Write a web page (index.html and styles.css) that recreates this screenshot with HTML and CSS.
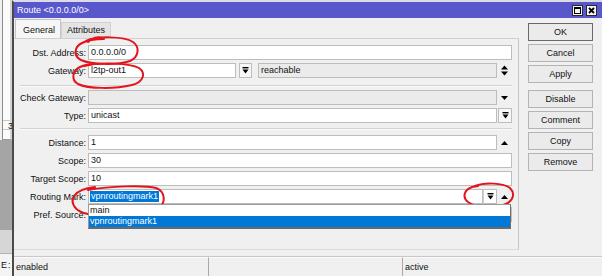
FILE: index.html
```html
<!DOCTYPE html>
<html lang="en">

<head>
    <meta charset="UTF-8">
    <title>Route &lt;0.0.0.0/0&gt;</title>
    <link rel="stylesheet" href="styles.css">
</head>

<body>
    <div class="screen">
        <div class="backdrop">
            <div class="bk-top">
                <div class="bk-row">3</div>
            </div>
            <div class="bk-mid"></div>
            <div class="bk-low"></div>
            <div class="bk-bot">E:</div>
        </div>

        <div class="window">
            <div class="titlebar">
                <span class="title">Route &lt;0.0.0.0/0&gt;</span>
                <div class="winbtns">
                    <span class="winbtn"><span class="max-icon"></span></span>
                    <span class="winbtn">
                        <svg width="7" height="7" viewBox="0 0 7 7"><path d="M1 1L6 6M6 1L1 6" stroke="#000" stroke-width="1.8"/></svg>
                    </span>
                </div>
            </div>

            <div class="main">
                <div class="left">
                    <div class="tabs">
                        <div class="tab active">General</div>
                        <div class="tab">Attributes</div>
                    </div>
                    <div class="panel">
                        <div class="group">
                            <div class="row">
                                <span class="label">Dst. Address:</span>
                                <div class="field">0.0.0.0/0</div>
                            </div>
                            <div class="row">
                                <span class="label">Gateway:</span>
                                <div class="field gw">l2tp-out1</div>
                                <div class="ddbtn gw-btn">
                                    <svg width="7" height="7" viewBox="0 0 7 7"><rect x="0.5" y="0" width="6" height="1.4"/><path d="M0.5 2.6H6.5L3.5 6.6Z"/></svg>
                                </div>
                                <div class="field ro reach">reachable</div>
                                <div class="icon-col">
                                    <svg width="7" height="11" viewBox="0 0 7 11"><path d="M0 4.5L3.5 0.5L7 4.5Z M0 6.5L3.5 10.5L7 6.5Z"/></svg>
                                </div>
                            </div>
                        </div>

                        <div class="sep first"></div>

                        <div class="group">
                            <div class="row">
                                <span class="label">Check Gateway:</span>
                                <div class="field ro"></div>
                                <div class="icon-col">
                                    <svg width="7" height="4" viewBox="0 0 7 4"><path d="M0 0H7L3.5 4Z"/></svg>
                                </div>
                            </div>
                            <div class="row">
                                <span class="label">Type:</span>
                                <div class="field">unicast</div>
                                <div class="ddbtn side">
                                    <svg width="7" height="7" viewBox="0 0 7 7"><rect x="0.5" y="0" width="6" height="1.4"/><path d="M0.5 2.6H6.5L3.5 6.6Z"/></svg>
                                </div>
                            </div>
                        </div>

                        <div class="sep"></div>

                        <div class="group">
                            <div class="row">
                                <span class="label">Distance:</span>
                                <div class="field">1</div>
                                <div class="icon-col">
                                    <svg width="7" height="4" viewBox="0 0 7 4"><path d="M0 4H7L3.5 0Z"/></svg>
                                </div>
                            </div>
                            <div class="row">
                                <span class="label">Scope:</span>
                                <div class="field">30</div>
                            </div>
                            <div class="row">
                                <span class="label">Target Scope:</span>
                                <div class="field">10</div>
                            </div>
                            <div class="row">
                                <span class="label">Routing Mark:</span>
                                <div class="combo">
                                    <div class="field"><span class="selected-text">vpnroutingmark1</span></div>
                                    <div class="ddbtn inner">
                                        <svg width="7" height="7" viewBox="0 0 7 7"><rect x="0.5" y="0" width="6" height="1.4"/><path d="M0.5 2.6H6.5L3.5 6.6Z"/></svg>
                                    </div>
                                    <ul class="droplist">
                                        <li>main</li>
                                        <li class="picked">vpnroutingmark1</li>
                                    </ul>
                                </div>
                                <div class="icon-col">
                                    <svg width="7" height="4" viewBox="0 0 7 4"><path d="M0 4H7L3.5 0Z"/></svg>
                                </div>
                            </div>
                            <div class="row">
                                <span class="label">Pref. Source:</span>
                                <div class="field"></div>
                            </div>
                        </div>
                    </div>
                </div>

                <div class="buttons">
                    <button class="btn default">OK</button>
                    <button class="btn">Cancel</button>
                    <button class="btn">Apply</button>
                    <button class="btn gap">Disable</button>
                    <button class="btn">Comment</button>
                    <button class="btn">Copy</button>
                    <button class="btn">Remove</button>
                </div>
            </div>

            <div class="statusbar">
                <div class="cell">enabled</div>
                <div class="cell"></div>
                <div class="cell">active</div>
            </div>
        </div>

        <!-- red pen marks drawn over the dialog -->
        <svg class="marks" width="602" height="276" viewBox="0 0 602 276">
            <path d="M88 42 C92 38, 98 36, 102 38 M86 41 C96 36, 124 36, 133 42 C140 47, 139 57, 130 61 C118 65, 92 65, 81 60 C73 56, 74 47, 82 43 C88 40, 96 39, 104 39" />
            <path d="M84 66 C100 62, 130 63, 139 68 C146 73, 144 82, 132 85 C115 89, 88 89, 78 84 C71 80, 72 71, 80 67 C84 65, 90 64, 96 64" />
            <path d="M88 190 C110 186, 145 185, 156 188 C166 192, 166 203, 158 209 C148 215, 108 217, 88 214 C75 212, 70 203, 74 196 C78 190, 86 188, 95 187" />
            <path d="M475 186 C485 182, 503 183, 510 188 C515 193, 514 200, 506 204 C496 209, 476 208, 468 202 C462 197, 464 190, 472 187 L478 186" />
        </svg>
    </div>
</body>

</html>
```

FILE: styles.css
```css
* {
    box-sizing: border-box;
    margin: 0;
    padding: 0;
}

body {
    font-family: "Liberation Sans", Arial, sans-serif;
    font-size: 9px;
    color: #111;
}

.screen {
    position: relative;
    display: flex;
    width: 602px;
    height: 276px;
    overflow: hidden;
    background-color: #f0f0f0;
}

/* window behind the dialog */
.backdrop {
    width: 12px;
    flex: none;
    display: flex;
    flex-direction: column;
}

.bk-top {
    height: 140px;
    margin-left: 2px;
    padding-top: 120px;
    background-color: #fbfbfb;
    border-left: 1px solid #8c8c8c;
    border-right: 2px solid #d4d4d4;
    border-bottom: 1px solid #9a9a9a;
}

.bk-row {
    height: 10px;
    line-height: 10px;
    padding-left: 5px;
    border-top: 1px solid #c8c8c8;
    border-bottom: 1px solid #c8c8c8;
}

.bk-mid {
    height: 90px;
    background-color: #a5a5a5;
}

.bk-low {
    height: 23px;
    background-color: #d6d6d6;
}

.bk-bot {
    flex: 1;
    line-height: 22px;
    padding-left: 1px;
    background-color: #f4f4f4;
    border-top: 1px solid #b4b4b4;
    letter-spacing: 1px;
}

/* dialog */
.window {
    flex: 1;
    display: flex;
    flex-direction: column;
    border-left: 2px solid #4a4a4a;
    border-top: 2px solid #dcdce6;
}

.titlebar {
    height: 16px;
    display: flex;
    align-items: center;
    justify-content: space-between;
    padding-left: 3px;
    padding-right: 5px;
    background-color: #5858cc;
    color: white;
}

.winbtns {
    display: flex;
    gap: 3px;
}

.winbtn {
    width: 11px;
    height: 11px;
    display: flex;
    align-items: center;
    justify-content: center;
    background-color: #f4f4f4;
    border: 1px solid #2a2a2a;
}

.max-icon {
    width: 7px;
    height: 7px;
    border: 1px solid #000;
    border-top-width: 2px;
}

.main {
    height: 238px;
    display: flex;
}

.left {
    width: 505px;
    display: flex;
    flex-direction: column;
    padding-bottom: 6px;
}

.tabs {
    height: 20px;
    display: flex;
    align-items: flex-end;
    padding-left: 1px;
}

.tab {
    height: 16px;
    line-height: 15px;
    padding: 0 5px;
    background-color: #e4e4e4;
    border: 1px solid #d2d2d2;
    border-bottom: none;
}

.tab.active {
    height: 19px;
    line-height: 20px;
    padding: 0 5px 0 7px;
    background-color: #f6f6f6;
    border-color: #c4c4c4;
}

.panel {
    flex: 1;
    padding: 6px 6px 0 1px;
    border-top: 1px solid #d0d0d0;
    border-right: 1px solid #c6c6c6;
    border-bottom: 1px solid #dadada;
}

.group {
    display: flex;
    flex-direction: column;
    gap: 3px;
}

.row {
    height: 15px;
    display: flex;
    align-items: center;
}

.label {
    width: 71px;
    flex: none;
    margin-right: 2px;
    text-align: right;
    white-space: nowrap;
}

.field {
    flex: 1;
    height: 15px;
    line-height: 13px;
    padding-left: 2px;
    background-color: white;
    border: 1px solid #bdbdbd;
    white-space: nowrap;
    overflow: hidden;
}

.field.ro {
    background-color: #ebebeb;
}

.field.gw {
    flex: none;
    width: 148px;
}

.field.reach {
    margin-left: 6px;
}

.icon-col {
    width: 15px;
    flex: none;
    display: flex;
    justify-content: center;
}

.ddbtn {
    width: 14px;
    height: 15px;
    flex: none;
    display: flex;
    align-items: center;
    justify-content: center;
    background-color: #f7f7f7;
    border: 1px solid #bdbdbd;
}

.ddbtn.gw-btn {
    width: 13px;
    margin-left: 3px;
}

.ddbtn.side {
    width: 14px;
    margin-left: 1px;
}

.ddbtn.inner {
    border-left-color: #d0d0d0;
    border-right-color: #bdbdbd;
    background-color: white;
}

.sep {
    height: 2px;
    margin: 5px 0 5px 5px;
    border-top: 1px solid #d2d2d2;
    border-bottom: 1px solid #fbfbfb;
}

.sep.first {
    margin: 7px 0 3px 5px;
}

.combo {
    position: relative;
    flex: 1;
    height: 15px;
    display: flex;
}

.selected-text {
    display: inline-block;
    line-height: 11px;
    padding: 0 1px;
    margin-left: -1px;
    background-color: #0078d7;
    color: white;
}

.droplist {
    position: absolute;
    top: 15px;
    left: 0;
    right: -14px;
    list-style-type: none;
    background-color: white;
    border: 1px solid #9a9a9a;
    border-right-color: #6e6e6e;
    border-bottom: 2px solid #6a6a6a;
    z-index: 2;
}

.droplist li {
    height: 11px;
    line-height: 11px;
    padding-left: 1px;
}

.droplist li.picked {
    background-color: #0078d7;
    color: white;
}

.buttons {
    width: 65px;
    margin-left: 9px;
    padding-top: 5px;
    display: flex;
    flex-direction: column;
    gap: 3px;
}

.btn {
    height: 18px;
    font-family: inherit;
    font-size: 9px;
    color: #111;
    background-color: #ebebeb;
    border: 1px solid #b4b4b4;
}

.btn.default {
    border-color: #6a6a6a;
}

.btn.gap {
    margin-top: 4px;
}

.statusbar {
    flex: 1;
    display: flex;
    border-top: 1px solid #c8c8c8;
}

.cell {
    width: 194px;
    padding-left: 2px;
    line-height: 18px;
    border-top: 1px solid #fafafa;
}

.cell + .cell {
    border-left: 1px solid #a8a8a8;
}

.cell:last-child {
    flex: 1;
}

.marks {
    position: absolute;
    left: 0;
    top: 0;
    pointer-events: none;
    fill: none;
    stroke: #e3141c;
    stroke-width: 2;
    stroke-linecap: round;
}
```
